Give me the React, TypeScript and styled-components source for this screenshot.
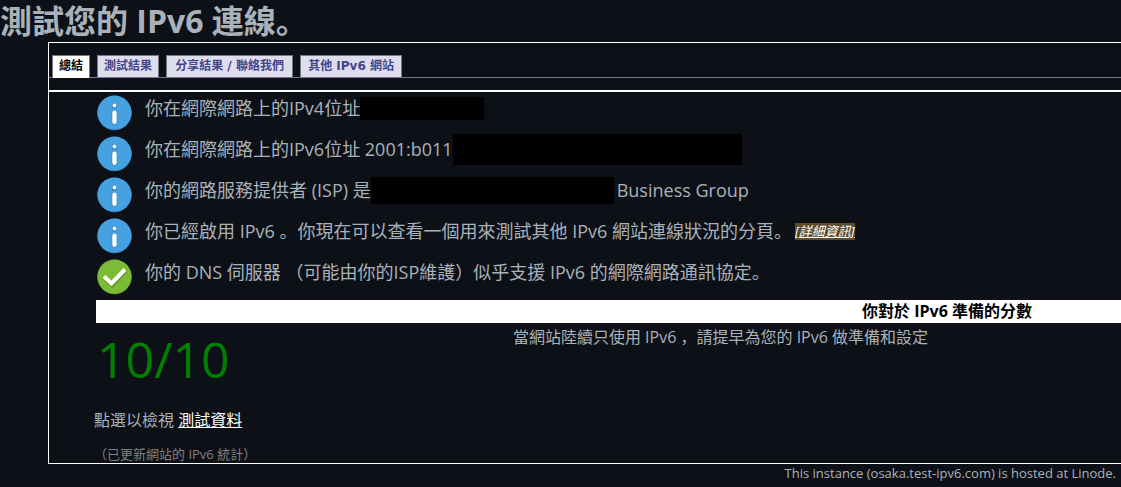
import React from "react";
import styled, { createGlobalStyle, css } from "styled-components";

const sans = `"Open Sans", "Noto Sans CJK SC", sans-serif`;

const Global = createGlobalStyle`
  *, *::before, *::after { box-sizing: border-box; }
  body {
    margin: 0;
    background: #0d1117;
    color: #a9b1ba;
    font: 16px/24px ${sans};
    overflow-x: hidden;
  }
`;

const Title = styled.h1`
  margin: 0;
  font-size: 32px;
  line-height: 42px;
  font-weight: 700;
  white-space: nowrap;
`;

const Panel = styled.main`
  margin-left: 48px;
  border: 1px solid #fff;
  border-right: 0;
`;

const TabBar = styled.nav`
  display: flex;
  gap: 7px;
  padding: 12px 3px 0;
  border-bottom: 1px solid #778;
`;

const Tab = styled.a<{ $active?: boolean; $minWidth: number }>`
  min-width: ${(p) => p.$minWidth}px;
  padding: 0 6px;
  border: 1px solid #778;
  border-bottom: 0;
  background: #dde;
  color: #448;
  font: bold 12px/21px "DejaVu Sans", "Noto Sans CJK SC", sans-serif;
  text-align: center;
  text-decoration: none;
  white-space: nowrap;
  ${(p) =>
    p.$active &&
    css`
      margin-bottom: -1px;
      background: #fff;
      color: #000;
    `}
`;

const Body = styled.section`
  margin-top: 12px;
  padding-left: 47px;
  border-top: 2px solid #fff;
`;

const Results = styled.ul`
  display: flex;
  flex-direction: column;
  gap: 5px;
  margin: 0;
  padding: 3px 0 5px 1px;
  list-style: none;
`;

const Result = styled.li`
  display: flex;
  gap: 12px;
  height: 36px;
  font-size: 18px;
  line-height: 26px;
  white-space: nowrap;
`;

const Message = styled.div`
  display: flex;
  align-items: center;
  height: 26px;
`;

const Redacted = styled.span<{ $width: number; $height: number }>`
  flex: none;
  width: ${(p) => p.$width}px;
  height: ${(p) => p.$height}px;
  margin-right: 3px;
  background: #000;
`;

const MoreInfo = styled.a`
  margin-left: 3px;
  background: #5b4a2c;
  color: #fff;
  font-size: 13px;
  font-style: italic;
  line-height: 17px;
`;

const Banner = styled.h2`
  margin: 0;
  padding-right: 89px;
  background: #fff;
  color: #000;
  font-size: 16px;
  line-height: 23px;
  text-align: right;
`;

const ScoreRow = styled.div`
  display: flex;
`;

const Score = styled.div`
  flex: none;
  width: 224px;
  padding-left: 1px;
  color: #008000;
  font-size: 50px;
  line-height: 72px;
`;

const ScoreText = styled.p`
  flex: 1;
  margin: 0;
  padding-top: 2px;
  text-align: center;
`;

const DataLine = styled.p`
  margin: 0 0 0 -2px;
  padding: 13px 0 14px;
`;

const DataLink = styled.a`
  color: #fff;
`;

const Updated = styled.p`
  margin: 0 0 0 -2px;
  color: #808080;
  font-size: 13px;
  line-height: 17px;
`;

const Footer = styled.footer`
  padding-right: 5px;
  font-size: 13px;
  line-height: 18px;
  text-align: right;
`;

const Icon = styled.svg`
  flex: none;
  width: 36px;
  height: 36px;
`;

const InfoIcon = () => (
  <Icon viewBox="0 0 36 36" role="img" aria-label="info">
    <circle cx="17.5" cy="18" r="17.2" fill="#2f7fb8" />
    <circle cx="17.5" cy="17.600" r="17" fill="#45a1e0" />
    <circle cx="17.5" cy="11" r="2.8" fill="#2f7fb8" />
    <rect x="14.700" y="15.500" width="5.600" height="14" rx="2.8" fill="#2f7fb8" />
    <circle cx="17.5" cy="10.500" r="2" fill="#fff" />
    <rect x="15.300" y="15.500" width="4.400" height="13.500" rx="2.2" fill="#fff" />
  </Icon>
);

const OkIcon = () => (
  <Icon viewBox="0 0 36 36" role="img" aria-label="ok">
    <circle cx="17.5" cy="18" r="17.2" fill="#5c9427" />
    <circle cx="17.5" cy="17.600" r="17" fill="#7bbb36" />
    <path d="M7.500 18.500l7.500 7.500L28.500 11.500" fill="none" stroke="#5c9427" strokeWidth="4.600" />
    <path d="M7 17.500l7.500 7L28 10.500" fill="none" stroke="#fff" strokeWidth="4" />
  </Icon>
);

const tabs = [
  { label: "總結", minWidth: 38 },
  { label: "測試結果", minWidth: 62 },
  { label: "分享結果 / 聯絡我們", minWidth: 127 },
  { label: "其他 IPv6 網站", minWidth: 102 },
];

export default function App() {
  return (
    <>
      <Global />
      <Title>測試您的 IPv6 連線。</Title>
      <Panel>
        <TabBar>
          {tabs.map((tab, i) => (
            <Tab key={tab.label} href="#" $active={i === 0} $minWidth={tab.minWidth}>
              {tab.label}
            </Tab>
          ))}
        </TabBar>
        <Body>
          <Results>
            <Result>
              <InfoIcon />
              <Message>
                你在網際網路上的IPv4位址
                <Redacted $width={124} $height={23} />
              </Message>
            </Result>
            <Result>
              <InfoIcon />
              <Message>
                你在網際網路上的IPv6位址 2001:b011
                <Redacted $width={289} $height={31} />
              </Message>
            </Result>
            <Result>
              <InfoIcon />
              <Message>
                你的網路服務提供者 (ISP) 是
                <Redacted $width={243} $height={27} />
                Business Group
              </Message>
            </Result>
            <Result>
              <InfoIcon />
              <Message>
                你已經啟用 IPv6 。你現在可以查看一個用來測試其他 IPv6 網站連線狀況的分頁。
                <MoreInfo href="#">[詳細資訊]</MoreInfo>
              </Message>
            </Result>
            <Result>
              <OkIcon />
              <Message>你的 DNS 伺服器 （可能由你的ISP維護）似乎支援 IPv6 的網際網路通訊協定。</Message>
            </Result>
          </Results>
          <Banner>你對於 IPv6 準備的分數</Banner>
          <ScoreRow>
            <Score>10/10</Score>
            <ScoreText>當網站陸續只使用 IPv6 ，請提早為您的 IPv6 做準備和設定</ScoreText>
          </ScoreRow>
          <DataLine>
            點選以檢視 <DataLink href="#">測試資料</DataLink>
          </DataLine>
          <Updated>（已更新網站的 IPv6 統計）</Updated>
        </Body>
      </Panel>
      <Footer>This instance (osaka.test-ipv6.com) is hosted at Linode.</Footer>
    </>
  );
}
